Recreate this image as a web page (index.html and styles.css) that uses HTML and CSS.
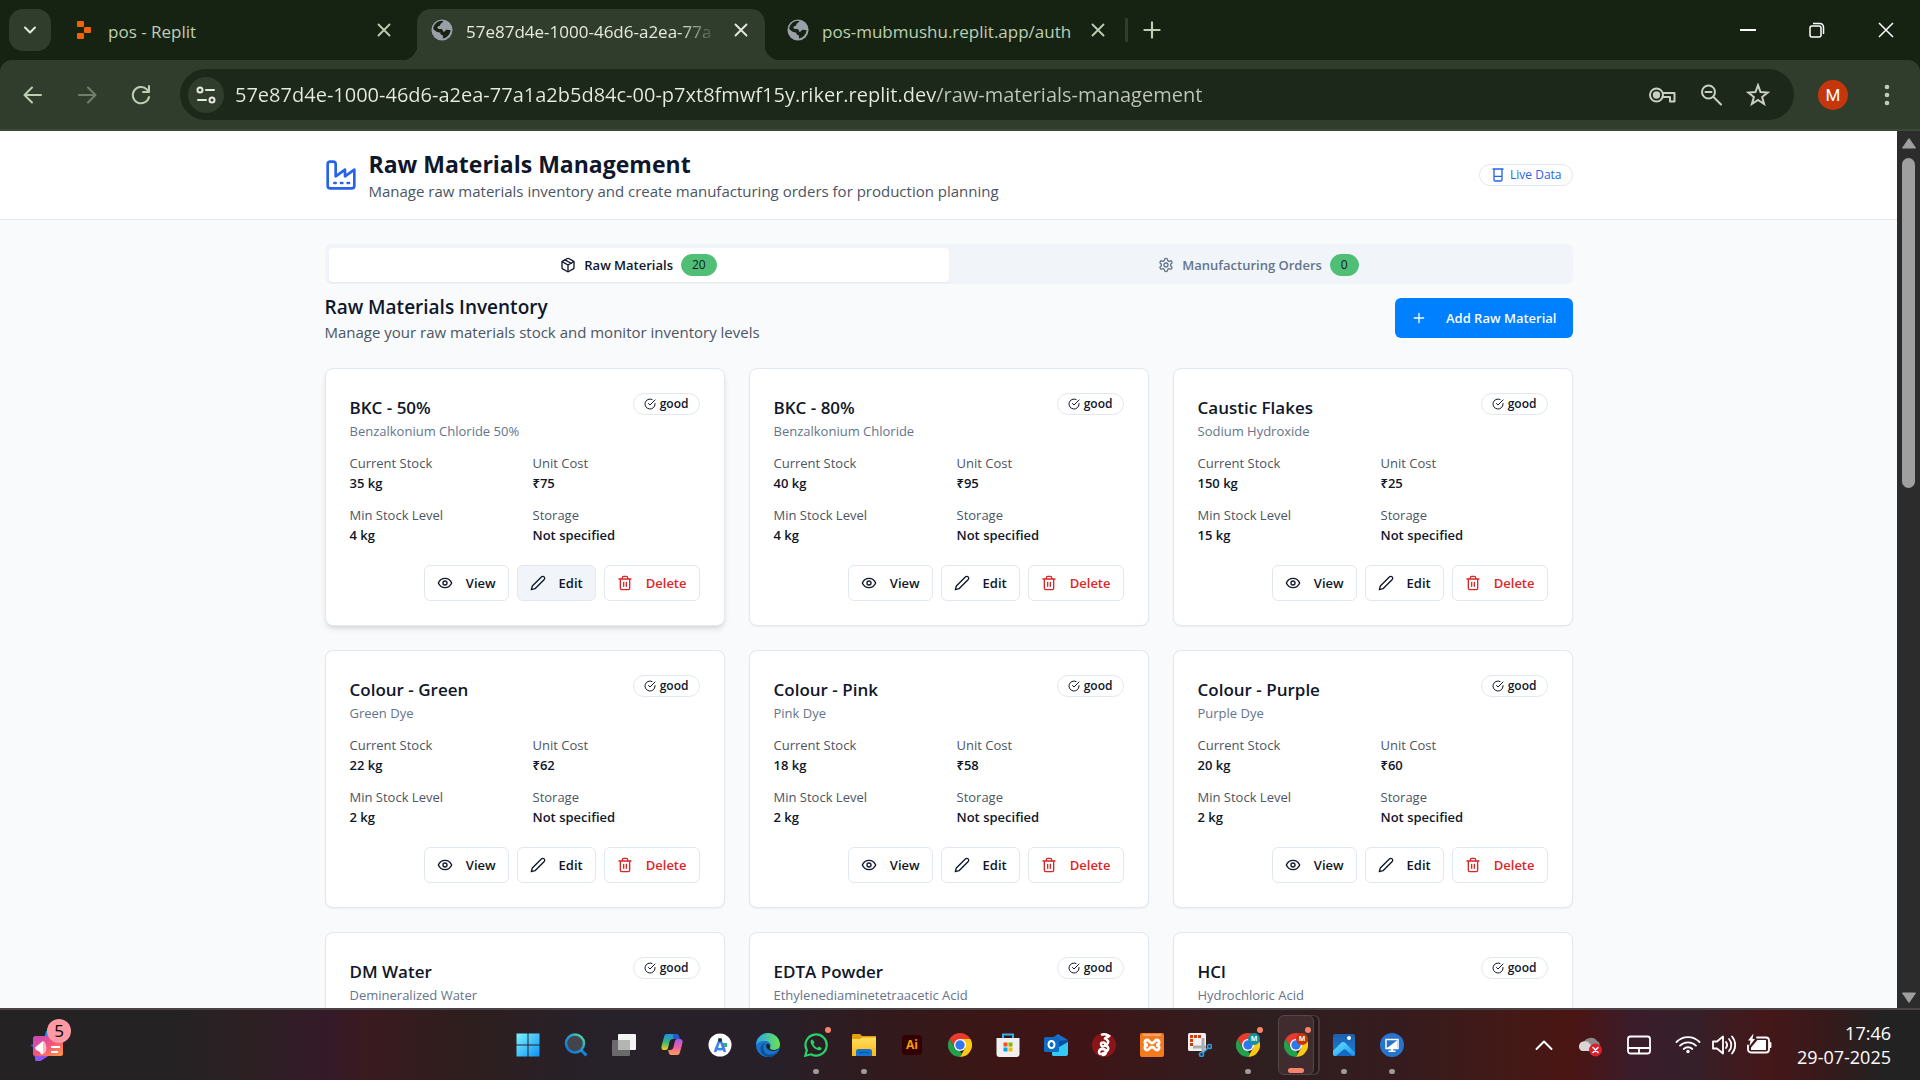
FILE: index.html
```html
<!DOCTYPE html>
<html lang="en">
<head>
<meta charset="utf-8">
<meta name="viewport" content="width=device-width, initial-scale=1">
<title>Raw Materials Management</title>
<link rel="stylesheet" href="styles.css">
</head>
<body>
<svg class="sprite" aria-hidden="true">
  <defs>
    <linearGradient id="g-win" x1="0" y1="0" x2="1" y2="1"><stop offset="0" stop-color="#7df3ff"/><stop offset="1" stop-color="#0b93f5"/></linearGradient>
    <linearGradient id="g-search" x1="1" y1="0" x2="0" y2="1"><stop offset="0" stop-color="#5fe08a"/><stop offset=".4" stop-color="#2a9fd0"/><stop offset="1" stop-color="#0b6fe0"/></linearGradient>
    <linearGradient id="g-cop1" x1="0" y1="0" x2="0" y2="1"><stop offset="0" stop-color="#1b8fea"/><stop offset=".5" stop-color="#35b37a"/><stop offset="1" stop-color="#f5d21a"/></linearGradient>
    <linearGradient id="g-cop2" x1="0" y1="0" x2="0" y2="1"><stop offset="0" stop-color="#a55af0"/><stop offset=".5" stop-color="#ee5fa0"/><stop offset="1" stop-color="#ffa05c"/></linearGradient>
    <linearGradient id="g-edge" x1="0" y1="0" x2="1" y2="0"><stop offset="0" stop-color="#2aa5ea"/><stop offset="1" stop-color="#6be34e"/></linearGradient>
    <linearGradient id="g-folder" x1="0" y1="0" x2="0" y2="1"><stop offset="0" stop-color="#ffdc5e"/><stop offset="1" stop-color="#fbb915"/></linearGradient>
    <linearGradient id="g-photo" x1="0" y1="0" x2="0" y2="1"><stop offset="0" stop-color="#1d5fae"/><stop offset="1" stop-color="#1e7fd8"/></linearGradient>
    <linearGradient id="g-hill" x1="0" y1="0" x2="1" y2="1"><stop offset="0" stop-color="#63e6ff"/><stop offset="1" stop-color="#1c93ea"/></linearGradient>
    <linearGradient id="g-card" x1="0" y1="0" x2="1" y2="1"><stop offset="0" stop-color="#c04ac0"/><stop offset=".5" stop-color="#f4517c"/><stop offset="1" stop-color="#ff9c3c"/></linearGradient>
  </defs>
  <symbol id="i-factory" viewBox="0 0 24 24"><path d="M2 20a2 2 0 0 0 2 2h16a2 2 0 0 0 2-2V8l-7 5V8l-7 5V4a2 2 0 0 0-2-2H4a2 2 0 0 0-2 2Z"/><path d="M17 18h1M12 18h1M7 18h1"/></symbol>
  <symbol id="i-beaker" viewBox="0 0 24 24"><path d="M4.5 3h15M6 3v16a2 2 0 0 0 2 2h8a2 2 0 0 0 2-2V3M6 14h12"/></symbol>
  <symbol id="i-package" viewBox="0 0 24 24"><path d="m7.5 4.27 9 5.15"/><path d="M21 8a2 2 0 0 0-1-1.73l-7-4a2 2 0 0 0-2 0l-7 4A2 2 0 0 0 3 8v8a2 2 0 0 0 1 1.73l7 4a2 2 0 0 0 2 0l7-4A2 2 0 0 0 21 16Z"/><path d="m3.3 7 8.7 5 8.7-5M12 22V12"/></symbol>
  <symbol id="i-settings" viewBox="0 0 24 24"><path d="M12.22 2h-.44a2 2 0 0 0-2 2v.18a2 2 0 0 1-1 1.73l-.43.25a2 2 0 0 1-2 0l-.15-.08a2 2 0 0 0-2.73.73l-.22.38a2 2 0 0 0 .73 2.73l.15.1a2 2 0 0 1 1 1.72v.51a2 2 0 0 1-1 1.74l-.15.09a2 2 0 0 0-.73 2.73l.22.38a2 2 0 0 0 2.73.73l.15-.08a2 2 0 0 1 2 0l.43.25a2 2 0 0 1 1 1.73V20a2 2 0 0 0 2 2h.44a2 2 0 0 0 2-2v-.18a2 2 0 0 1 1-1.73l.43-.25a2 2 0 0 1 2 0l.15.08a2 2 0 0 0 2.73-.73l.22-.39a2 2 0 0 0-.73-2.73l-.15-.08a2 2 0 0 1-1-1.74v-.5a2 2 0 0 1 1-1.74l.15-.09a2 2 0 0 0 .73-2.73l-.22-.38a2 2 0 0 0-2.73-.73l-.15.08a2 2 0 0 1-2 0l-.43-.25a2 2 0 0 1-1-1.73V4a2 2 0 0 0-2-2z"/><circle cx="12" cy="12" r="3"/></symbol>
  <symbol id="i-plus" viewBox="0 0 24 24"><path d="M5 12h14M12 5v14"/></symbol>
  <symbol id="i-check" viewBox="0 0 24 24"><path d="M22 11.08V12a10 10 0 1 1-5.93-9.14"/><path d="m9 11 3 3L22 4"/></symbol>
  <symbol id="i-eye" viewBox="0 0 24 24"><path d="M2 12s3-7 10-7 10 7 10 7-3 7-10 7-10-7-10-7Z"/><circle cx="12" cy="12" r="3"/></symbol>
  <symbol id="i-pen" viewBox="0 0 24 24"><path d="M17 3a2.85 2.83 0 1 1 4 4L7.500 20.500 2 22l1.500-5.500Z"/></symbol>
  <symbol id="i-trash" viewBox="0 0 24 24"><path d="M3 6h18M19 6v14c0 1-1 2-2 2H7c-1 0-2-1-2-2V6M8 6V4c0-1 1-2 2-2h4c1 0 2 1 2 2v2M10 11v6M14 11v6"/></symbol>
  <symbol id="i-close" viewBox="0 0 24 24"><path d="m6 6 12 12M18 6 6 18"/></symbol>
  <symbol id="i-globe" viewBox="0 0 24 24"><circle cx="12" cy="12" r="11.500" fill="#9aa0a8"/><path class="land" d="M13.500 2.500c-1 2-3 1.500-3.500 4-.3 1.800-2.500.5-3 2.500-.3 1.500 1.500 2 3 2 2 0 3 .5 3 2s2 1 2.500 0 2-1.500 3.500-1h2.300c-.2 4.500-3.500 8.500-8.300 9.300v-3.500c-2 0-3-1.300-2.700-2.800-3-.2-5.500-1.500-7.800-4C2.500 6.500 6.500 2.200 12 2z"/></symbol>
  <symbol id="i-chrome" viewBox="0 0 24 24"><path d="M1.600 6A12 12 0 0 1 22.400 6H12L7 15z" fill="#ea3b2e"/><path d="M22.400 6A12 12 0 0 1 12 24l5.200-9L12 6z" fill="#fdc914"/><path d="M1.600 6 6.800 15l5.200 3 1.800 2.800L12 24A12 12 0 0 1 1.600 6z" fill="#23a04b"/><circle cx="12" cy="12" r="6" fill="#fff"/><circle cx="12" cy="12" r="4.700" fill="#2f77ee"/></symbol>
</svg>

<header class="browser">
  <div class="tabstrip">
    <button class="tab-search" aria-label="Search tabs"><svg class="line" width="20" height="20" viewBox="0 0 20 20"><path d="m5 7.500 5 5 5-5"/></svg></button>
    <div class="tab tab-first">
      <svg width="18" height="20" viewBox="0 0 18 20" fill="#f26207"><rect x="2" y="1" width="7" height="6" rx="1"/><rect x="9" y="7" width="7" height="6" rx="1"/><rect x="2" y="13" width="7" height="6" rx="1"/></svg>
      <span class="tab-title">pos - Replit</span>
      <button class="tab-close" aria-label="Close tab"><svg class="line" width="22" height="22"><use href="#i-close"/></svg></button>
    </div>
    <div class="tab tab-active">
      <svg width="22" height="22"><use href="#i-globe"/></svg>
      <span class="tab-title">57e87d4e-1000-46d6-a2ea-77a</span>
      <button class="tab-close" aria-label="Close tab"><svg class="line" width="22" height="22"><use href="#i-close"/></svg></button>
    </div>
    <div class="tab tab-last">
      <svg width="22" height="22"><use href="#i-globe"/></svg>
      <span class="tab-title">pos-mubmushu.replit.app/auth</span>
      <button class="tab-close" aria-label="Close tab"><svg class="line" width="22" height="22"><use href="#i-close"/></svg></button>
    </div>
    <button class="new-tab" aria-label="New tab"><svg class="line" width="26" height="26"><use href="#i-plus"/></svg></button>
    <div class="window-buttons">
      <button aria-label="Minimise"><svg width="16" height="16" viewBox="0 0 16 16"><path d="M0 8h16" stroke-width="2"/></svg></button>
      <button aria-label="Restore"><svg width="16" height="16" viewBox="0 0 16 16"><rect x="1" y="4" width="11" height="11" rx="2"/><path d="M4 1.500h7A3.500 3.500 0 0 1 14.500 5v7"/></svg></button>
      <button aria-label="Close"><svg width="16" height="16" viewBox="0 0 16 16"><path d="m1 1 14 14M15 1 1 15"/></svg></button>
    </div>
  </div>
  <div class="toolbar">
    <nav class="nav-buttons" aria-label="History">
      <button aria-label="Back"><svg class="line" width="24" height="24" viewBox="0 0 24 24"><path d="M20 12H4M11 4.500 3.500 12l7.500 7.500"/></svg></button>
      <button class="is-off" aria-label="Forward"><svg class="line" width="24" height="24" viewBox="0 0 24 24"><path d="M4 12h16M13 4.500l7.500 7.500-7.500 7.500"/></svg></button>
      <button aria-label="Reload"><svg class="line" width="24" height="24" viewBox="0 0 24 24"><path d="M20 14a8.200 8.200 0 1 1-2-7.500L20 8.500M20 3v6h-6"/></svg></button>
    </nav>
    <div class="omnibox">
      <button class="site-info" aria-label="Site information"><svg class="line" width="22" height="22" viewBox="0 0 22 22"><circle cx="5" cy="6" r="2.500"/><path d="M11 6h8M3 16h8"/><circle cx="17" cy="16" r="2.500"/></svg></button>
      <input class="address" type="text" aria-label="Address" spellcheck="false" value="57e87d4e-1000-46d6-a2ea-77a1a2b5d84c-00-p7xt8fmwf15y.riker.replit.dev/raw-materials-management">
      <button aria-label="Passwords"><svg class="line" width="28" height="24" viewBox="0 0 28 24"><circle cx="8.500" cy="12" r="6.500"/><circle cx="8.500" cy="12" r="2.700" fill="currentColor"/><path d="M15 10h11.500v8.500h-4.500v-4.500h-7.500M22 14v3"/></svg></button>
      <button aria-label="Zoom"><svg class="line" width="24" height="24" viewBox="0 0 24 24"><circle cx="9.500" cy="9" r="6.500"/><path d="m14.500 14 7.500 7.500M6.500 9h6"/></svg></button>
      <button aria-label="Bookmark"><svg class="line star" width="24" height="24" viewBox="0 0 24 24"><path d="m12 2.200 2.500 6.900 7.200.4-5.600 4.500 2 7-6.100-4-6.100 4 2-7-5.600-4.500 7.200-.4z"/></svg></button>
    </div>
    <button class="avatar" aria-label="Profile">M</button>
    <button class="menu" aria-label="Menu"><svg width="6" height="24" viewBox="0 0 6 24" fill="currentColor"><circle cx="3" cy="4" r="2.300"/><circle cx="3" cy="12" r="2.300"/><circle cx="3" cy="20" r="2.300"/></svg></button>
  </div>
</header>

<div class="viewport">
  <div class="page">
    <header class="page-header">
      <div class="container header-row">
        <svg class="line brand" width="32" height="32"><use href="#i-factory"/></svg>
        <div class="header-text">
          <h1>Raw Materials Management</h1>
          <p>Manage raw materials inventory and create manufacturing orders for production planning</p>
        </div>
        <span class="badge badge-live"><svg class="line" width="16" height="16"><use href="#i-beaker"/></svg>Live Data</span>
      </div>
    </header>
    <main class="container content">
      <div class="tabs" role="tablist">
        <button role="tab" aria-selected="true"><svg class="line" width="16" height="16"><use href="#i-package"/></svg>Raw Materials<span class="badge badge-count">20</span></button>
        <button role="tab" aria-selected="false"><svg class="line" width="16" height="16"><use href="#i-settings"/></svg>Manufacturing Orders<span class="badge badge-count">0</span></button>
      </div>
      <div class="section-head">
        <div>
          <h2>Raw Materials Inventory</h2>
          <p>Manage your raw materials stock and monitor inventory levels</p>
        </div>
        <button class="add"><svg class="line" width="16" height="16"><use href="#i-plus"/></svg>Add Raw Material</button>
      </div>
      <div class="cards">
        <article class="card is-hovered">
          <div class="card-head"><div><h3>BKC - 50%</h3><p>Benzalkonium Chloride 50%</p></div><span class="badge"><svg class="line" width="12" height="12"><use href="#i-check"/></svg>good</span></div>
          <dl><div><dt>Current Stock</dt><dd>35 kg</dd></div><div><dt>Unit Cost</dt><dd>₹75</dd></div><div><dt>Min Stock Level</dt><dd>4 kg</dd></div><div><dt>Storage</dt><dd>Not specified</dd></div></dl>
          <div class="actions"><button><svg class="line" width="16" height="16"><use href="#i-eye"/></svg>View</button><button class="is-hovered"><svg class="line" width="16" height="16"><use href="#i-pen"/></svg>Edit</button><button class="delete"><svg class="line" width="16" height="16"><use href="#i-trash"/></svg>Delete</button></div>
        </article>
        <article class="card">
          <div class="card-head"><div><h3>BKC - 80%</h3><p>Benzalkonium Chloride</p></div><span class="badge"><svg class="line" width="12" height="12"><use href="#i-check"/></svg>good</span></div>
          <dl><div><dt>Current Stock</dt><dd>40 kg</dd></div><div><dt>Unit Cost</dt><dd>₹95</dd></div><div><dt>Min Stock Level</dt><dd>4 kg</dd></div><div><dt>Storage</dt><dd>Not specified</dd></div></dl>
          <div class="actions"><button><svg class="line" width="16" height="16"><use href="#i-eye"/></svg>View</button><button><svg class="line" width="16" height="16"><use href="#i-pen"/></svg>Edit</button><button class="delete"><svg class="line" width="16" height="16"><use href="#i-trash"/></svg>Delete</button></div>
        </article>
        <article class="card">
          <div class="card-head"><div><h3>Caustic Flakes</h3><p>Sodium Hydroxide</p></div><span class="badge"><svg class="line" width="12" height="12"><use href="#i-check"/></svg>good</span></div>
          <dl><div><dt>Current Stock</dt><dd>150 kg</dd></div><div><dt>Unit Cost</dt><dd>₹25</dd></div><div><dt>Min Stock Level</dt><dd>15 kg</dd></div><div><dt>Storage</dt><dd>Not specified</dd></div></dl>
          <div class="actions"><button><svg class="line" width="16" height="16"><use href="#i-eye"/></svg>View</button><button><svg class="line" width="16" height="16"><use href="#i-pen"/></svg>Edit</button><button class="delete"><svg class="line" width="16" height="16"><use href="#i-trash"/></svg>Delete</button></div>
        </article>
        <article class="card">
          <div class="card-head"><div><h3>Colour - Green</h3><p>Green Dye</p></div><span class="badge"><svg class="line" width="12" height="12"><use href="#i-check"/></svg>good</span></div>
          <dl><div><dt>Current Stock</dt><dd>22 kg</dd></div><div><dt>Unit Cost</dt><dd>₹62</dd></div><div><dt>Min Stock Level</dt><dd>2 kg</dd></div><div><dt>Storage</dt><dd>Not specified</dd></div></dl>
          <div class="actions"><button><svg class="line" width="16" height="16"><use href="#i-eye"/></svg>View</button><button><svg class="line" width="16" height="16"><use href="#i-pen"/></svg>Edit</button><button class="delete"><svg class="line" width="16" height="16"><use href="#i-trash"/></svg>Delete</button></div>
        </article>
        <article class="card">
          <div class="card-head"><div><h3>Colour - Pink</h3><p>Pink Dye</p></div><span class="badge"><svg class="line" width="12" height="12"><use href="#i-check"/></svg>good</span></div>
          <dl><div><dt>Current Stock</dt><dd>18 kg</dd></div><div><dt>Unit Cost</dt><dd>₹58</dd></div><div><dt>Min Stock Level</dt><dd>2 kg</dd></div><div><dt>Storage</dt><dd>Not specified</dd></div></dl>
          <div class="actions"><button><svg class="line" width="16" height="16"><use href="#i-eye"/></svg>View</button><button><svg class="line" width="16" height="16"><use href="#i-pen"/></svg>Edit</button><button class="delete"><svg class="line" width="16" height="16"><use href="#i-trash"/></svg>Delete</button></div>
        </article>
        <article class="card">
          <div class="card-head"><div><h3>Colour - Purple</h3><p>Purple Dye</p></div><span class="badge"><svg class="line" width="12" height="12"><use href="#i-check"/></svg>good</span></div>
          <dl><div><dt>Current Stock</dt><dd>20 kg</dd></div><div><dt>Unit Cost</dt><dd>₹60</dd></div><div><dt>Min Stock Level</dt><dd>2 kg</dd></div><div><dt>Storage</dt><dd>Not specified</dd></div></dl>
          <div class="actions"><button><svg class="line" width="16" height="16"><use href="#i-eye"/></svg>View</button><button><svg class="line" width="16" height="16"><use href="#i-pen"/></svg>Edit</button><button class="delete"><svg class="line" width="16" height="16"><use href="#i-trash"/></svg>Delete</button></div>
        </article>
        <article class="card">
          <div class="card-head"><div><h3>DM Water</h3><p>Demineralized Water</p></div><span class="badge"><svg class="line" width="12" height="12"><use href="#i-check"/></svg>good</span></div>
        </article>
        <article class="card">
          <div class="card-head"><div><h3>EDTA Powder</h3><p>Ethylenediaminetetraacetic Acid</p></div><span class="badge"><svg class="line" width="12" height="12"><use href="#i-check"/></svg>good</span></div>
        </article>
        <article class="card">
          <div class="card-head"><div><h3>HCl</h3><p>Hydrochloric Acid</p></div><span class="badge"><svg class="line" width="12" height="12"><use href="#i-check"/></svg>good</span></div>
        </article>
      </div>
    </main>
  </div>
  <div class="scrollbar" aria-hidden="true">
    <svg width="16" height="12" viewBox="0 0 16 12"><path d="M8 1.500 14.500 11h-13z"/></svg>
    <div class="track"><div class="thumb"></div></div>
    <svg width="16" height="12" viewBox="0 0 16 12"><path d="M8 10.500 14.500 1h-13z"/></svg>
  </div>
</div>

<footer class="taskbar">
  <div class="widgets">
    <button aria-label="Widgets"><svg width="36" height="32" viewBox="0 0 36 32"><path d="M14 10l2-8 9-2v10z" fill="#1493e8"/><path d="m0 16 10-3 3 14z" fill="#2456b8"/><path d="m4 24 22-2-20 13z" fill="#8a55f0"/><rect x="3" y="7" width="30" height="20" rx="2.500" fill="url(#g-card)"/><path d="M5 18.500 13 12v13l-2 .5-1-2.500-4-2z" fill="#fff"/><path d="M13 12c4 1 5 12 0 13z" fill="#ffb9c4"/><path d="M21 18h9M21 23h7" stroke="#fff" stroke-width="2"/></svg><span class="count">5</span></button>
  </div>
  <nav class="apps" aria-label="Taskbar">
    <button aria-label="Start"><svg width="24" height="24" viewBox="0 0 24 24" fill="url(#g-win)"><path d="M.5.5h11v11H.5zM12.500.5h11v11h-11zM.5 12.500h11v11H.5zM12.500 12.500h11v11h-11z"/></svg></button>
    <button aria-label="Search"><svg width="24" height="24" viewBox="0 0 24 24" fill="none"><path d="m17 17 5.500 5.500" stroke="#1585dc" stroke-width="3"/><circle cx="11" cy="10.500" r="9" fill="#42454a" stroke="url(#g-search)" stroke-width="2.500"/></svg></button>
    <button aria-label="Task view"><svg width="24" height="24" viewBox="0 0 24 24"><rect x="6" y="1" width="18" height="16" rx="1" fill="#f3f3f3"/><rect x="0" y="7" width="18" height="16" rx="1" fill="#6a6a6a"/><path d="M6 7h12v10H6z" fill="#b4b4b4"/></svg></button>
    <button aria-label="Copilot"><svg width="24" height="24" viewBox="0 0 24 24"><path d="M7 1h7c2 0 2 1 3 5h-4c-2 0-3 1-3.500 3L8 15c-.5 1.500-1 2-3 2-4 0-4-2-3-6l2-7c.5-2 1-3 3-3z" fill="url(#g-cop1)"/><path d="M13 1h3c3 0 3 2 4 5h-7z" fill="#2a58d0"/><path d="M19 6c4 0 4 2 3 6l-2 7c-.5 2-1 3-3 3h-5c-3 0-3-2-4-5h2c2 0 3-1 3.500-3L15 8c.5-1.500 1.500-2 4-2z" fill="url(#g-cop2)"/></svg></button>
    <button aria-label="Android Studio"><svg width="24" height="24" viewBox="0 0 24 24"><circle cx="12" cy="12" r="11.500" fill="#fff"/><path d="M15 10h4v4h-4z" fill="#36b36a"/><path d="m12 6-5 13M12 6l5 13M7 15c3 1.500 7 1.500 10 0" fill="none" stroke="#3f7ff0" stroke-width="2.600"/><circle cx="12" cy="7" r="2" fill="#263238"/></svg></button>
    <button aria-label="Edge"><svg width="24" height="24" viewBox="0 0 24 24"><circle cx="12" cy="12" r="12" fill="#1674ca"/><path d="M.3 9.500A12 12 0 0 1 24 11c0 4-3 6-6.500 6-3 0-4.500-1-3.500-2.500 2-3-1-6.500-5-6.500C5 8 2 9 .3 12z" fill="url(#g-edge)"/><path d="M9 10c-4 5-1 11.500 5 11.500 3 0 6-1 8-3.500C20 22 16.500 24 13 24 3 23 2 12 9 10z" fill="#104f94"/><path d="M10.500 11c2-1 4 1 3.500 3.500-.5 1.500.5 2.500 3.500 2.500 2 0 4-.5 5.500-2-1 2-3 3-6 3-4 0-8-3-6.500-7z" fill="#24221f"/></svg></button>
    <button aria-label="WhatsApp" class="is-open has-alert"><svg width="24" height="24" viewBox="0 0 24 24" fill="none"><path d="m1.300 22.700 1.500-5.600A10.600 10.600 0 1 1 7 21.300z" stroke="#25d366" stroke-width="2.200"/><path d="M8.500 6.500c-1.500 0-2.200 1.500-1.800 3 .8 3.500 4.300 7 8 7.700 1.500.3 3-.8 2.900-2.300l-2.800-1.500-1.400 1.500c-1.800-.7-3.200-2.100-4-3.900l1.200-1.400z" fill="#25d366"/></svg></button>
    <button aria-label="File Explorer" class="is-open"><svg width="24" height="24" viewBox="0 0 24 24"><path d="M0 2.500C0 1.500.5 1 1.500 1H8l2 2h14v6H0z" fill="#e2a10c"/><path d="M0 6h8l2-1.500h14V23H0z" fill="url(#g-folder)"/><path d="M4 23v-5c0-1 1-2 2-2h12c1 0 2 1 2 2v5z" fill="#1274d0"/><path d="M7 19.500h10" stroke="#0a4f9a" stroke-width="1.200"/></svg></button>
    <button aria-label="Illustrator"><span class="ai">Ai</span></button>
    <button aria-label="Chrome"><svg width="24" height="24"><use href="#i-chrome"/></svg></button>
    <button aria-label="Store"><svg width="24" height="24" viewBox="0 0 24 24"><path d="M7 6V1.500h10V6" fill="none" stroke="#35b4ee" stroke-width="2"/><path d="M.5 5h23v16a3 3 0 0 1-3 3h-17a3 3 0 0 1-3-3z" fill="#f0f0f0"/><path d="M7.500 9.500h4v4h-4z" fill="#f0511e"/><path d="M12.500 9.500h4v4h-4z" fill="#7fba00"/><path d="M7.500 14.500h4v4h-4z" fill="#00a3ee"/><path d="M12.500 14.500h4v4h-4z" fill="#ffb800"/></svg></button>
    <button aria-label="Outlook"><svg width="24" height="24" viewBox="0 0 24 24"><path d="M4 8 14 1l10 6v8H4z" fill="#1a6fc8"/><path d="m12 8 12-1v6L14 18z" fill="#0b4da0"/><path d="m24 9-16 9v4l1 1h13a2 2 0 0 0 2-2z" fill="#35c8f5"/><rect x="0" y="4" width="15" height="15" rx="1.500" fill="#0f6cc4"/><ellipse cx="7.500" cy="11.500" rx="3" ry="3.600" fill="none" stroke="#fff" stroke-width="2"/></svg></button>
    <button aria-label="WireGuard"><svg width="24" height="24" viewBox="0 0 24 24" fill="none"><circle cx="12" cy="12" r="12" fill="#8a1519"/><path d="M9 2c4-2 6 0 8 1-2 2-4 1-4 3M12 5c4 2 6 4 2 7s-5 1-5-1 4-2 4 0M12 12c5 1 5 4 3 6s-8 5-8 1 7-4 7 0c0 2-2 3-4 3" stroke="#fff" stroke-width="2.500"/></svg></button>
    <button aria-label="XAMPP"><svg width="24" height="24" viewBox="0 0 24 24" fill="none"><rect width="24" height="24" rx="2" fill="#f47a20"/><path d="M3 2h18" stroke="#f9b27a" stroke-width="1.500"/><path d="M8 12c-4 0-4-5-1-5s2 3 5 3 2-3 5-3 3 5-1 5c4 0 4 5 1 5s-2-3-5-3-2 3-5 3-3-5 1-5z" stroke="#fff" stroke-width="2.800"/></svg></button>
    <button aria-label="Snipping Tool"><svg width="24" height="24" viewBox="0 0 24 24" fill="none"><rect width="18" height="18" rx="1.500" fill="#f0f0f0"/><path d="M13 3.500H3.500V14" stroke="#d83b01" stroke-width="3" stroke-dasharray="3 1"/><path d="M15 5v14M5 14h13" stroke="#a9adb2" stroke-width="3"/><circle cx="21.500" cy="13.500" r="2" stroke="#2b9bdc" stroke-width="1.700"/><circle cx="13.500" cy="21.500" r="2" stroke="#2b9bdc" stroke-width="1.700"/><path d="m15 20 5-5" stroke="#2b9bdc" stroke-width="1.700"/></svg></button>
    <button aria-label="Chrome, work profile" class="is-open has-alert"><svg width="24" height="24"><use href="#i-chrome"/></svg><span class="profile profile-teal">M</span></button>
    <button aria-label="Chrome, personal profile" class="is-current has-alert"><svg width="24" height="24"><use href="#i-chrome"/></svg><span class="profile profile-red">M</span></button>
    <button aria-label="Photos" class="is-open"><svg width="24" height="24" viewBox="0 0 24 24"><rect x="1" y="1" width="22" height="22" rx="2" fill="url(#g-photo)"/><path d="M1 18 9 10c1.500-1.500 3-1.500 4.500 0L23 20v1a2 2 0 0 1-2 2H3a2 2 0 0 1-2-2z" fill="url(#g-hill)"/><path d="m4 23 7-6c1-1 2-1 3 0l7 6z" fill="#1668c4"/><circle cx="17" cy="5" r="2" fill="#fff"/></svg></button>
    <button aria-label="Remote Desktop" class="is-open"><svg width="24" height="24" viewBox="0 0 24 24"><circle cx="12" cy="12" r="12" fill="#2774cf"/><rect x="6" y="6.500" width="12" height="9" fill="#2774cf" stroke="#fff" stroke-width="1.500"/><path d="M7 15 17 7.500V15zM11 16h2v2h-2zM8.500 17.500h7V19h-7z" fill="#fff"/></svg></button>
  </nav>
  <div class="tray">
    <button aria-label="Show hidden icons"><svg width="18" height="24" viewBox="0 0 18 24"><path d="m1.500 16 7.500-7.500 7.500 7.500" stroke-width="2"/></svg></button>
    <button aria-label="OneDrive"><svg width="26" height="24" viewBox="0 0 26 24"><path d="M7 12a7 6 0 0 1 13-4c3 1 4 5 1 8H6z" fill="#8f8789" stroke="none"/><path d="M5 18a5 5 0 0 1 1-9.500c4-1 6 1 8 3.500l3 6z" fill="#d9d5d6" stroke="none"/><circle cx="18.500" cy="17" r="6.500" fill="#d9202c" stroke="none"/><path d="m16 14.500 5 5m0-5-5 5" stroke-width="1.600"/></svg></button>
    <button aria-label="Touchpad"><svg width="24" height="24" viewBox="0 0 24 24"><rect x="1" y="3.500" width="22" height="17" rx="2.500"/><path d="M1 15h22M12 15v5"/></svg></button>
    <button class="status" aria-label="Network, volume and battery">
      <svg width="26" height="24" viewBox="0 0 26 24"><path d="M1.500 9a16 16 0 0 1 23 0M5 12.700a11.300 11.300 0 0 1 16 0M8.700 16a6.200 6.200 0 0 1 8.600 0"/><circle cx="13" cy="18.500" r="1.700" fill="#fff" stroke="none"/></svg>
      <svg width="26" height="24" viewBox="0 0 26 24"><path d="M2 8.500h4L12 3.500v17l-6-5H2zM15 9a5 5 0 0 1 0 6M18 6a9 9 0 0 1 0 12M21 3.500a13 13 0 0 1 0 17"/></svg>
      <svg width="26" height="24" viewBox="0 0 26 24"><path d="M10 4.500h9a3 3 0 0 1 3 3v9a3 3 0 0 1-3 3H4a3 3 0 0 1-3-3v-4M23.500 10v4" /><path d="M10.500 7H19v10H4v-2.500z" fill="#fff" stroke="none"/><path d="M6.500.5 1 7.500h2.500L2.500 13 8 6H5.500z" fill="#fff" stroke="none"/></svg>
    </button>
    <button class="clock"><time>17:46</time><time>29-07-2025</time></button>
  </div>
</footer>
</body>
</html>
```
FILE: styles.css
```css
:root {
  --ink: #0f172a;
  --muted: #64748b;
  --body: #4b5563;
  --line: #e2e8f0;
  --frame: #303d2d;
  --strip: #162313;
  --mint: #bccfb4;
}

* { box-sizing: border-box; }

body {
  margin: 0;
  height: 100vh;
  display: flex;
  flex-direction: column;
  overflow: hidden;
  font-family: "Open Sans", "Noto Sans", sans-serif;
  font-size: 14px;
  line-height: 20px;
  color: var(--ink);
  background: var(--strip);
}

h1, h2, h3, p, dl, dd { margin: 0; }

button {
  display: flex;
  align-items: center;
  justify-content: center;
  padding: 0;
  border: 0;
  background: none;
  font: inherit;
  color: inherit;
}

svg { flex: none; display: block; }

.sprite { position: absolute; width: 0; height: 0; }

.line {
  fill: none;
  stroke: currentColor;
  stroke-width: 2;
  stroke-linecap: round;
  stroke-linejoin: round;
}

.star { stroke-linejoin: miter; }

/* Browser frame */
.browser { flex: none; color: var(--mint); }

.tabstrip {
  display: flex;
  align-items: center;
  height: 60px;
  padding: 9px 0 0 9px;
  font-size: 17px;
  line-height: 24px;
}

.tab-search {
  align-self: flex-start;
  width: 42px;
  height: 42px;
  border-radius: 14px;
  background: var(--frame);
  color: #e4eadf;
}

.tab {
  position: relative;
  display: flex;
  align-items: center;
  gap: 13px;
  height: 51px;
  padding: 0 13px 9px 14px;
}

.tab-first { width: 347px; margin-left: 10px; margin-right: 9px; gap: 15px; }
.tab-active { width: 348px; border-radius: 14px 14px 0 0; background: var(--frame); color: #e4eadf; }
.tab-last { width: 360px; padding-left: 22px; padding-right: 16px; }

.tab-active::before,
.tab-active::after {
  content: "";
  position: absolute;
  bottom: 0;
  width: 14px;
  height: 14px;
}
.tab-active::before { left: -14px; background: radial-gradient(circle at 0 0, transparent 14px, var(--frame) 14px); }
.tab-active::after { right: -14px; background: radial-gradient(circle at 100% 0, transparent 14px, var(--frame) 14px); }

.land { fill: var(--strip); }

.tab-title { flex: 1; padding-top: 3px; overflow: hidden; white-space: nowrap; }
.tab-active .tab-title { -webkit-mask-image: linear-gradient(90deg, #000 85%, transparent); mask-image: linear-gradient(90deg, #000 85%, transparent); }

.new-tab {
  height: 24px;
  margin-bottom: 9px;
  padding-left: 11px;
  border-left: 3px solid var(--frame);
}

.window-buttons { display: flex; margin-left: auto; margin-bottom: 9px; color: #fff; }
.window-buttons button { width: 69px; }
.window-buttons svg { fill: none; stroke: #fff; stroke-width: 1.500; }

.toolbar {
  display: flex;
  align-items: center;
  height: 71px;
  padding: 9px 30px 11px 6px;
  border-radius: 12px 12px 0 0;
  background: var(--frame);
  box-shadow: inset 0 -2px #3c4839;
}

.nav-buttons { display: flex; width: 174px; }
.nav-buttons button { width: 54px; height: 51px; }
.nav-buttons .is-off { opacity: .45; }

.omnibox {
  flex: 1;
  display: flex;
  align-items: center;
  gap: 23px;
  height: 51px;
  padding: 0 24px 0 8px;
  border-radius: 26px;
  background: #1c291a;
  color: #c9d0c3;
}

.site-info { width: 36px; height: 36px; border-radius: 50%; background: var(--frame); color: #e4eadf; }

.address {
  flex: 1;
  min-width: 0;
  margin-left: -12px;
  padding: 0;
  border: 0;
  outline: 0;
  font: inherit;
  font-size: 20px;
  line-height: 28px;
  color: transparent;
  background: linear-gradient(90deg, #e6ecdf 701px, #bfc8b9 701px);
  -webkit-background-clip: text;
  background-clip: text;
}

.avatar {
  width: 30px;
  height: 30px;
  margin-left: 24px;
  border-radius: 50%;
  background: #c5360c;
  color: #fff;
  font-family: Roboto, sans-serif;
  font-size: 17px;
}

.menu { margin-left: 36px; }

/* Page */
.viewport { flex: 1; min-height: 0; display: flex; }
.page { flex: 1; min-width: 0; overflow: hidden; background: #f9fafb; }

.container { max-width: 1280px; margin: 0 auto; padding: 0 16px; }

.page-header { padding: 16px 0; border-bottom: 1px solid #e5e7eb; background: #fff; }
.header-row { display: flex; align-items: center; gap: 12px; }
.header-text { flex: 1; }
.brand { color: #2563eb; }
h1, h2, h3 { padding-top: 2px; }
h1 { font-size: 23px; line-height: 30px; font-weight: 700; }
.header-text p, .section-head p { font-size: 15px; line-height: 24px; color: var(--body); }

.badge {
  display: inline-flex;
  align-items: center;
  gap: 4px;
  height: 22px;
  padding: 0 10px;
  border: 1px solid var(--line);
  border-radius: 11px;
  font-size: 12px;
  line-height: 16px;
  font-weight: 600;
}
.badge-live { color: #2563eb; font-weight: 500; }
.badge-count { border-color: #4fbf76; background: #4fbf76; color: var(--ink); font-weight: 500; }

.content { padding-top: 24px; }

.tabs {
  display: grid;
  grid-template-columns: 1fr 1fr;
  align-items: center;
  height: 40px;
  padding: 2px 4px 0;
  border-radius: 6px;
  background: #f1f5f9;
}
.tabs button { gap: 8px; height: 34px; border-radius: 4px; font-size: 13px; font-weight: 600; color: var(--muted); }
.tabs button[aria-selected="true"] { background: #fff; color: var(--ink); box-shadow: 0 1px 2px rgb(0 0 0 / 5%); }

.section-head { display: flex; align-items: center; justify-content: space-between; margin: 8px 0 24px; }
h2 { font-size: 19px; line-height: 26px; font-weight: 600; }

.add {
  gap: 19px;
  height: 40px;
  padding: 0 16px;
  border-radius: 6px;
  background: #0080ff;
  color: #f8fafc;
  font-size: 13px;
  font-weight: 600;
}

.cards { display: grid; grid-template-columns: repeat(3, 1fr); gap: 24px; }

.card {
  padding: 24px;
  border: 1px solid var(--line);
  border-radius: 8px;
  background: #fff;
  box-shadow: 0 1px 2px rgb(0 0 0 / 5%);
}
.card.is-hovered { box-shadow: 0 4px 6px -1px rgb(0 0 0 / 10%), 0 2px 4px -2px rgb(0 0 0 / 10%); }

.card-head { display: flex; align-items: flex-start; justify-content: space-between; }
h3 { font-size: 17px; line-height: 26px; font-weight: 600; }
.card-head p { font-size: 13px; color: var(--muted); }

dl { display: grid; grid-template-columns: 1fr 1fr; gap: 12px 16px; margin: 12px 0 20px; font-size: 13px; }
dt { color: var(--body); }
dd { font-weight: 600; }

.actions { display: flex; justify-content: flex-end; gap: 8px; }
.actions button {
  gap: 13px;
  height: 36px;
  padding: 0 12px;
  border: 1px solid var(--line);
  border-radius: 6px;
  background: #fff;
  font-size: 13px;
  font-weight: 600;
}
.actions .is-hovered { background: #f1f5f9; }
.actions .delete { color: #dc2626; }

.scrollbar {
  flex: none;
  display: flex;
  flex-direction: column;
  align-items: center;
  gap: 9px;
  width: 23px;
  padding: 6px 0 4px;
  background: #2c2c2c;
}
.scrollbar svg { fill: #9f9f9f; stroke: #9f9f9f; stroke-linejoin: round; }
.track { flex: 1; width: 13px; }
.thumb { height: 40%; border-radius: 7px; background: #9f9f9f; }

/* Taskbar */
.taskbar {
  flex: none;
  display: grid;
  grid-template-columns: 1fr auto 1fr;
  align-items: center;
  height: 72px;
  padding-bottom: 1px;
  border-top: 2px solid #4a4244;
  color: #fff;
  background: linear-gradient(90deg, #242223 0, #242223 9%, #2d2023 13%, #341a29 17%, #3b1a20 19%, #2e1e1d 24%, #27212a 31%, #272028 40%, #33191b 47%, #3b1616 51%, #3f1416 56%, #351b1d 62%, #2e1f20 66%, #361b1e 73%, #421a17 78%, #4a1513 82%, #3b1c2b 85%, #35202a 88%, #451719 92%, #38191b 95%, #232222 98%);
}

.widgets { padding-left: 30px; }
.widgets button { position: relative; }
.count {
  position: absolute;
  top: -10px;
  left: 17px;
  width: 24px;
  height: 24px;
  border-radius: 50%;
  background: #ff99a4;
  color: #000;
  font-size: 17px;
  line-height: 24px;
}

.apps { display: flex; }
.apps button { position: relative; width: 48px; height: 60px; }
.apps .is-open::after,
.apps .is-current::after {
  content: "";
  position: absolute;
  bottom: 1px;
  width: 6px;
  height: 5px;
  border-radius: 3px;
  background: #a09a9b;
}
.apps .is-current::after { width: 16px; background: #f6846c; }
.apps .is-current { width: 36px; margin: 0 6px; border: 1px solid #55464a; border-radius: 6px; background: #402c2f; box-shadow: 5px 0 0 -1px #241819, 6px 0 0 #4a383b; }
.apps .has-alert::before {
  content: "";
  position: absolute;
  top: 12px;
  left: 33px;
  width: 6px;
  height: 6px;
  border-radius: 50%;
  background: #f6846c;
}
.apps .is-current::before { left: 26px; top: 11px; }

.ai {
  width: 20px;
  height: 20px;
  border-radius: 4px;
  background: #330000;
  color: #ff9a00;
  font-size: 12px;
  line-height: 19px;
  font-weight: 700;
}

.profile {
  position: absolute;
  top: 18px;
  left: 24px;
  width: 12px;
  height: 12px;
  border-radius: 50%;
  font-size: 7px;
  line-height: 12px;
  font-weight: 700;
}
.is-current .profile { left: 17px; top: 17px; }
.profile-teal { background: #0e93a0; }
.profile-red { background: #c5360c; }

.tray { display: flex; justify-content: flex-end; align-items: center; padding-right: 29px; }
.tray svg { fill: none; stroke: #fff; stroke-width: 1.800; stroke-linejoin: round; stroke-linecap: round; }
.tray > button { margin-left: 24px; }
.tray .status { gap: 10px; }
.tray .clock { flex-direction: column; align-items: flex-end; font-size: 18px; line-height: 24px; }
```
